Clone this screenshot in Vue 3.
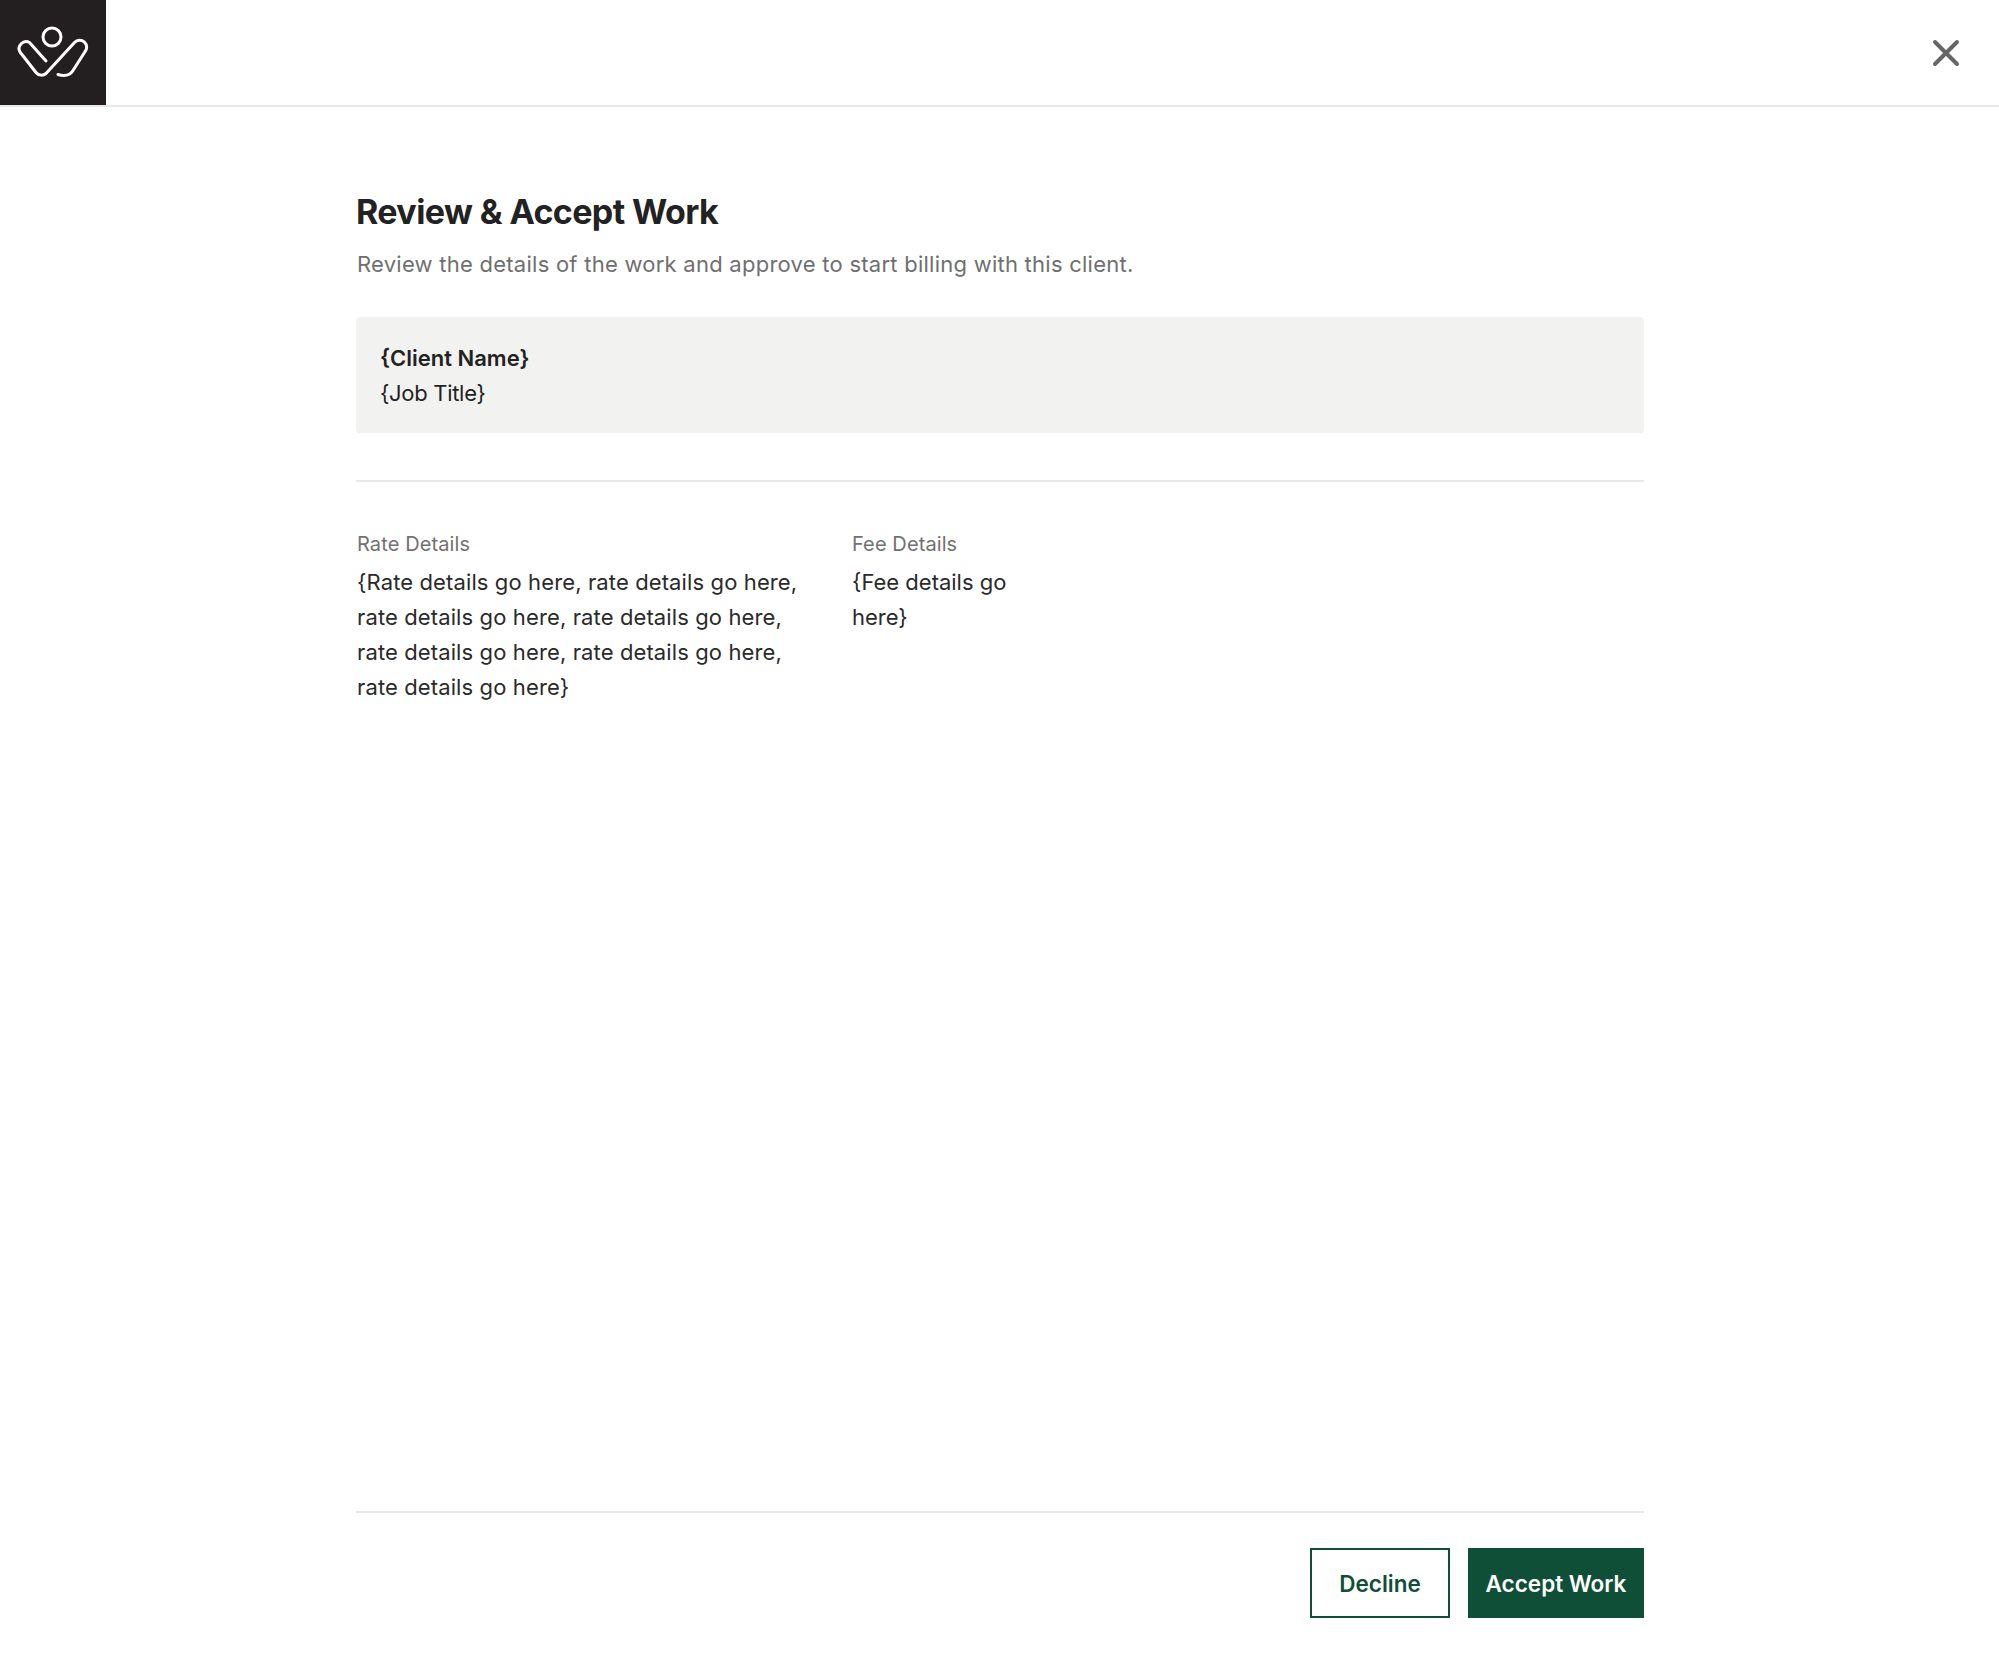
<script setup>
const rateText = '{Rate details go here, rate details go here, rate details go here, rate details go here, rate details go here, rate details go here, rate details go here}'
</script>

<template>
  <div class="page">
    <header class="top">
      <div class="logo">
        <svg width="105" height="105" viewBox="0 0 105 105" fill="none" stroke="#fff" stroke-width="3" stroke-linecap="round" stroke-linejoin="round">
          <circle cx="52" cy="37" r="9" />
          <path d="M46 61 L29.5 42.5 A7 7 0 0 0 20 52 L36 72.5 A7 7 0 0 0 46 73.5 L74.5 42.5 A7 7 0 0 1 84.8 52 L73 70.5 C70 75.5 65 76.5 58 74.5" />
        </svg>
      </div>
      <button class="close" aria-label="Close">
        <svg width="30" height="30" viewBox="0 0 30 30" fill="none" stroke="#666" stroke-width="4" stroke-linecap="round">
          <path d="M4 4 L26 26 M26 4 L4 26" />
        </svg>
      </button>
    </header>

    <main class="content">
      <h1 class="title">Review &amp; Accept Work</h1>
      <p class="sub">Review the details of the work and approve to start billing with this client.</p>

      <section class="client">
        <div class="client-name">{Client Name}</div>
        <div class="job">{Job Title}</div>
      </section>

      <hr class="rule first" />

      <section class="details">
        <div class="col rate">
          <div class="label">Rate Details</div>
          <div class="value">{{ rateText }}</div>
        </div>
        <div class="col fee">
          <div class="label">Fee Details</div>
          <div class="value">{Fee details go here}</div>
        </div>
      </section>

      <div class="spacer"></div>

      <hr class="rule" />
      <footer class="actions">
        <button class="btn outline">Decline</button>
        <button class="btn solid">Accept Work</button>
      </footer>
    </main>
  </div>
</template>

<style scoped>
.page {
  width: 1999px;
  height: 1676px;
  display: flex;
  flex-direction: column;
  background: #fff;
  font-family: Inter, "Liberation Sans", sans-serif;
  color: #222;
}
.top {
  height: 105px;
  flex: none;
  box-sizing: content-box;
  border-bottom: 2px solid #e8e8e6;
  display: flex;
  justify-content: space-between;
  align-items: center;
}
.logo {
  width: 106px;
  height: 105px;
  background: #231f20;
}
.logo svg { display: block; }
.close {
  border: 0;
  background: none;
  padding: 0;
  margin-right: 38px;
  width: 30px;
  height: 30px;
}
.close svg { display: block; }
.content {
  flex: 1;
  width: 1288px;
  margin-left: 356px;
  display: flex;
  flex-direction: column;
}
.title {
  margin: 84px 0 0;
  font-size: 34px;
  line-height: 42px;
  font-weight: 700;
  letter-spacing: -0.6px;
  color: #222;
}
.sub {
  margin: 15px 0 0 1px;
  font-size: 22px;
  line-height: 32px;
  letter-spacing: 0.25px;
  color: #6f6f6f;
}
.client {
  margin-top: 37px;
  height: 116px;
  box-sizing: border-box;
  padding: 24px 24px;
  background: #f2f2f1;
  border-radius: 4px;
  font-size: 22px;
  line-height: 35px;
}
.client-name { font-weight: 600; }
.job { letter-spacing: -0.3px; }
.rule {
  margin: 0;
  border: 0;
  border-top: 2px solid #e8e8e6;
}
.rule.first { margin-top: 47px; }
.details {
  display: flex;
  margin: 49px 0 0 1px;
}
.rate { width: 495px; }
.fee { width: 170px; }
.label {
  font-size: 20px;
  line-height: 26px;
  letter-spacing: 0.1px;
  color: #717171;
}
.value {
  margin-top: 8px;
  font-size: 22px;
  line-height: 35px;
  color: #2a2a2a;
}
.rate .value { width: 450px; letter-spacing: 0.12px; }
.spacer { flex: 1; }
.actions {
  display: flex;
  justify-content: flex-end;
  gap: 18px;
  margin-top: 35px;
  margin-bottom: 58px;
}
.btn {
  height: 70px;
  box-sizing: border-box;
  font-family: inherit;
  font-size: 22.5px;
  font-weight: 600;
  padding: 0;
}
.outline {
  width: 140px;
  background: #fff;
  border: 2px solid #0f4f38;
  color: #0f4f38;
}
.solid {
  width: 176px;
  background: #0f4f38;
  border: 0;
  color: #fff;
}
</style>
